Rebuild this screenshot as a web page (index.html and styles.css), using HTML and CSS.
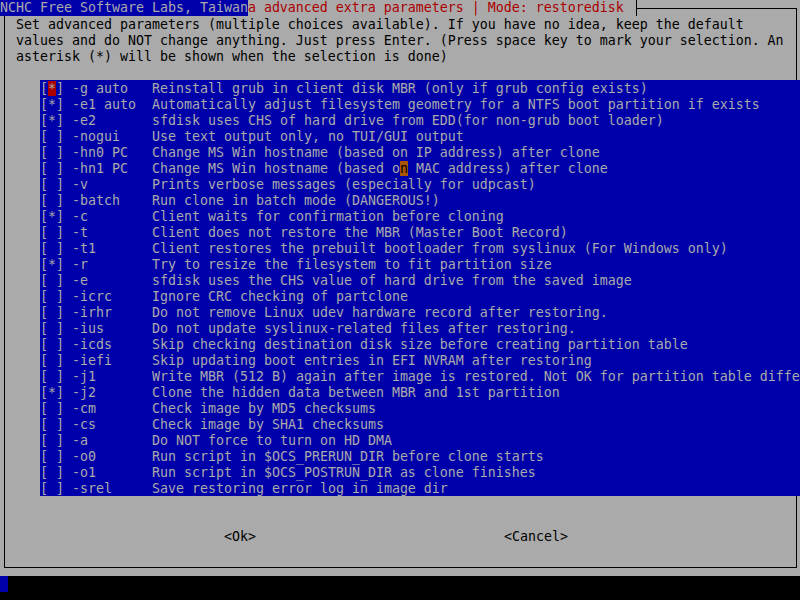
FILE: index.html
```html
<!DOCTYPE html>
<html lang="en">
<head>
    <meta charset="UTF-8">
    <title>Clonezilla - advanced extra parameters</title>
    <link rel="stylesheet" href="styles.css">
</head>
<body>
    <!-- Backtitle + dialog title -->
    <div class="topline">
        <span class="backtitle">NCHC Free Software Labs, Taiwan</span><span class="title">a advanced extra parameters | Mode: restoredisk </span><span class="rule"></span>
    </div>

    <div class="dialog">
        <div class="prompt">Set advanced parameters (multiple choices available). If you have no idea, keep the default
values and do NOT change anything. Just press Enter. (Press space key to mark your selection. An
asterisk (*) will be shown when the selection is done)</div>

        <!-- Checklist -->
        <div class="options">
            <div class="option"><span>[<span class="sel">*</span>]</span><span>-g auto</span><span>Reinstall grub in client disk MBR (only if grub config exists)</span></div>
            <div class="option"><span>[*]</span><span>-e1 auto</span><span>Automatically adjust filesystem geometry for a NTFS boot partition if exists</span></div>
            <div class="option"><span>[*]</span><span>-e2</span><span>sfdisk uses CHS of hard drive from EDD(for non-grub boot loader)</span></div>
            <div class="option"><span>[ ]</span><span>-nogui</span><span>Use text output only, no TUI/GUI output</span></div>
            <div class="option"><span>[ ]</span><span>-hn0 PC</span><span>Change MS Win hostname (based on IP address) after clone</span></div>
            <div class="option"><span>[ ]</span><span>-hn1 PC</span><span>Change MS Win hostname (based o<span class="hl">n</span> MAC address) after clone</span></div>
            <div class="option"><span>[ ]</span><span>-v</span><span>Prints verbose messages (especially for udpcast)</span></div>
            <div class="option"><span>[ ]</span><span>-batch</span><span>Run clone in batch mode (DANGEROUS!)</span></div>
            <div class="option"><span>[*]</span><span>-c</span><span>Client waits for confirmation before cloning</span></div>
            <div class="option"><span>[ ]</span><span>-t</span><span>Client does not restore the MBR (Master Boot Record)</span></div>
            <div class="option"><span>[ ]</span><span>-t1</span><span>Client restores the prebuilt bootloader from syslinux (For Windows only)</span></div>
            <div class="option"><span>[*]</span><span>-r</span><span>Try to resize the filesystem to fit partition size</span></div>
            <div class="option"><span>[ ]</span><span>-e</span><span>sfdisk uses the CHS value of hard drive from the saved image</span></div>
            <div class="option"><span>[ ]</span><span>-icrc</span><span>Ignore CRC checking of partclone</span></div>
            <div class="option"><span>[ ]</span><span>-irhr</span><span>Do not remove Linux udev hardware record after restoring.</span></div>
            <div class="option"><span>[ ]</span><span>-ius</span><span>Do not update syslinux-related files after restoring.</span></div>
            <div class="option"><span>[ ]</span><span>-icds</span><span>Skip checking destination disk size before creating partition table</span></div>
            <div class="option"><span>[ ]</span><span>-iefi</span><span>Skip updating boot entries in EFI NVRAM after restoring</span></div>
            <div class="option"><span>[ ]</span><span>-j1</span><span>Write MBR (512 B) again after image is restored. Not OK for partition table diffe</span></div>
            <div class="option"><span>[*]</span><span>-j2</span><span>Clone the hidden data between MBR and 1st partition</span></div>
            <div class="option"><span>[ ]</span><span>-cm</span><span>Check image by MD5 checksums</span></div>
            <div class="option"><span>[ ]</span><span>-cs</span><span>Check image by SHA1 checksums</span></div>
            <div class="option"><span>[ ]</span><span>-a</span><span>Do NOT force to turn on HD DMA</span></div>
            <div class="option"><span>[ ]</span><span>-o0</span><span>Run script in $OCS_PRERUN_DIR before clone starts</span></div>
            <div class="option"><span>[ ]</span><span>-o1</span><span>Run script in $OCS_POSTRUN_DIR as clone finishes</span></div>
            <div class="option"><span>[ ]</span><span>-srel</span><span>Save restoring error log in image dir</span></div>
        </div>

        <!-- Buttons -->
        <div class="buttons">
            <span>&lt;Ok&gt;</span>
            <span>&lt;Cancel&gt;</span>
        </div>
    </div>

    <!-- Console line under the dialog -->
    <div class="console"><span class="cursor"></span></div>
</body>
</html>
```

FILE: styles.css
```css
body {
    margin: 0;
    width: 800px;
    height: 600px;
    overflow: hidden;
    background-color: #aaaaaa;
    color: #000;
    font-family: "DejaVu Sans Mono", monospace;
    font-size: 13.29px; /* 8px per cell */
    line-height: 16px;
}
.topline {
    display: flex;
    height: 16px;
    white-space: pre;
}
.backtitle {
    background-color: #0000aa;
    color: #aaaaaa;
}
.title {
    color: #aa0000;
}
.rule {
    flex: 1;
    margin-left: 4px;
    margin-right: 3px;
    border-left: 1px solid #000;
    position: relative;
}
.rule::after {
    content: "";
    position: absolute;
    left: 0;
    right: 0;
    top: 8px;
    bottom: 0;
    border-top: 1px solid #000;
    border-right: 1px solid #000;
}
.dialog {
    box-sizing: border-box;
    height: 552px;
    margin: 0 3px 0 4px;
    padding-left: 11px;
    border: 1px solid #000;
    border-top: none;
}
.prompt {
    white-space: pre;
    padding-top: 1px;
    margin-bottom: 15px;
}
.options {
    box-sizing: border-box;
    width: 760px;
    height: 416px;
    margin-left: 24px;
    padding-top: 1px; /* glyph baseline sits a bit low in the console font */
    background-color: #0000aa;
    color: #aaaaaa;
    overflow: hidden;
}
.option {
    display: grid;
    grid-template-columns: 32px 80px auto;
    height: 16px;
    white-space: pre;
}
.sel {
    background-color: #aa0000;
}
.hl {
    background-color: #aa5500;
    color: #000;
}
.buttons {
    display: flex;
    gap: 248px;
    margin-top: 33px;
    padding-left: 208px;
}
.console {
    height: 24px;
    margin-top: 8px;
    background-color: #000;
}
.cursor {
    display: block;
    width: 8px;
    height: 16px;
    background-color: #0000aa;
}
```
